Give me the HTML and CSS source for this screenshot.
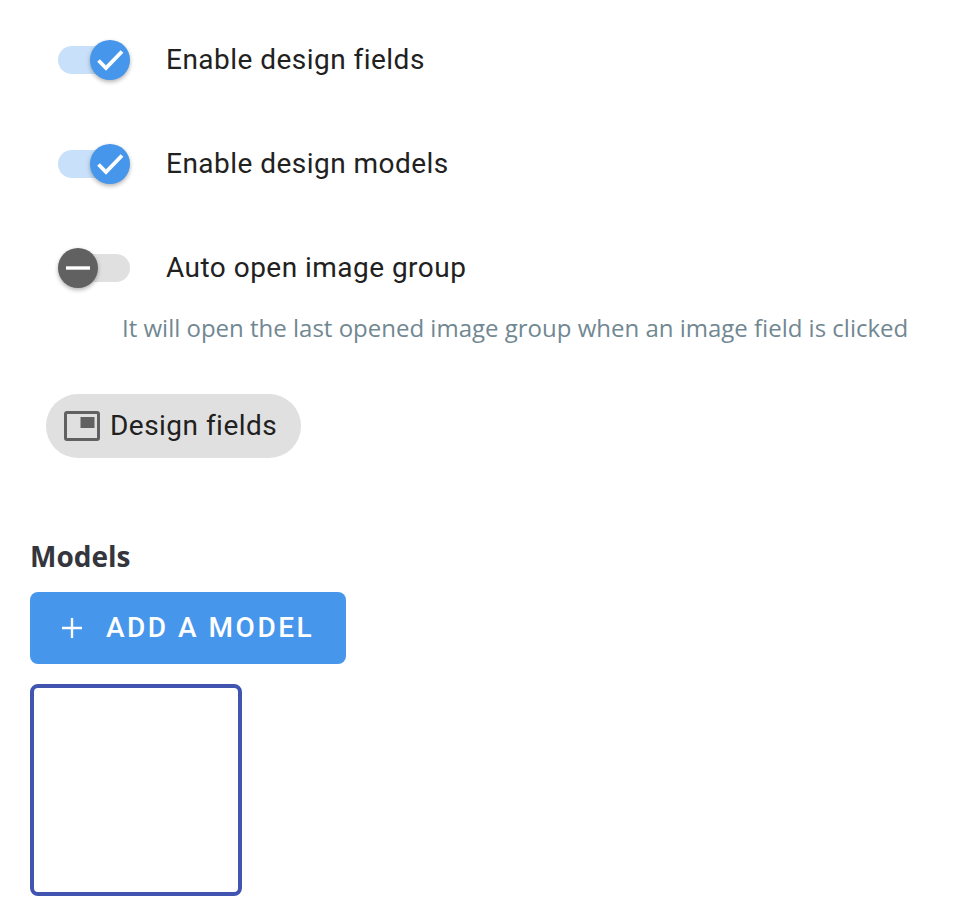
FILE: index.html
```html
<!DOCTYPE html>
<html lang="en">
<head>
<meta charset="utf-8">
<title>Settings</title>
<link rel="stylesheet" href="styles.css">
</head>
<body>
<main class="page">
  <section class="toggles">
    <label class="row">
      <span class="switch on"><span class="thumb">
        <svg viewBox="0 0 40 40" class="thumb-icon"><path d="M8.5 20.5l7.5 7.5L32 11.5" fill="none" stroke="#fff" stroke-width="3.8"/></svg>
      </span></span>
      <span class="label">Enable design fields</span>
    </label>
    <label class="row">
      <span class="switch on"><span class="thumb">
        <svg viewBox="0 0 40 40" class="thumb-icon"><path d="M8.5 20.5l7.5 7.5L32 11.5" fill="none" stroke="#fff" stroke-width="3.8"/></svg>
      </span></span>
      <span class="label">Enable design models</span>
    </label>
    <label class="row">
      <span class="switch off"><span class="thumb">
        <svg viewBox="0 0 40 40" class="thumb-icon"><path d="M8 20h24" fill="none" stroke="#fff" stroke-width="3.4"/></svg>
      </span></span>
      <span class="label">Auto open image group</span>
    </label>
  </section>
  <p class="hint">It will open the last opened image group when an image field is clicked</p>
  <div class="chip">
    <svg viewBox="0 0 36 30" class="chip-icon"><rect x="1.5" y="1.5" width="33" height="27" rx="1.5" fill="none" stroke="#616161" stroke-width="3"/><rect x="16.5" y="6" width="14" height="11" fill="#616161"/></svg>
    <span>Design fields</span>
  </div>
  <h2 class="heading">Models</h2>
  <button class="add" type="button">
    <svg viewBox="0 0 22 22" class="add-icon"><path d="M11 0v22M0 11h22" fill="none" stroke="#fff" stroke-width="2.6"/></svg>
    <span>ADD A MODEL</span>
  </button>
  <div class="model"></div>
</main>
</body>
</html>
```
FILE: styles.css
```css
* { box-sizing: border-box; }
html, body { margin: 0; background: #fff; }
body { height: 914px; overflow: hidden; }
.page { padding: 28px 0 0 30px; display: flex; flex-direction: column; align-items: flex-start; }
.toggles { display: flex; flex-direction: column; gap: 40px; padding-left: 28px; }
.row { display: flex; align-items: center; height: 64px; gap: 36px; }
.switch { position: relative; display: block; width: 72px; height: 28px; border-radius: 14px; }
.switch.on { background: #c8e0f9; }
.switch.off { background: #e0e0e0; }
.thumb { position: absolute; top: -6px; width: 40px; height: 40px; border-radius: 50%; box-shadow: 0 2px 4px rgba(0,0,0,.3); }
.on .thumb { right: 0; background: #4696ec; }
.off .thumb { left: 0; background: #616161; }
.thumb-icon { display: block; width: 40px; height: 40px; }
.label { font: 400 28px/32px Roboto, sans-serif; letter-spacing: .47px; color: #212121; }
.hint { margin: 12px 0 0 92px; font: 400 24px/32px "Open Sans", sans-serif; color: #718892; white-space: nowrap; }
.chip { margin: 50px 0 0 16px; display: flex; align-items: center; height: 64px; padding: 0 24px 0 18px; gap: 10px; border-radius: 32px; background: #e0e0e0; font: 400 28px/32px Roboto, sans-serif; letter-spacing: .47px; color: #212121; }
.chip-icon { width: 36px; height: 30px; }
.heading { margin: 80px 0 0 0; font: 700 28px/36px "Open Sans", sans-serif; color: #35363d; }
.add { margin-top: 18px; display: flex; align-items: center; gap: 24px; width: 316px; height: 72px; padding: 0 0 0 32px; border: 0; border-radius: 8px; background: #4696ec; color: #fff; font: 500 28px/32px Roboto, sans-serif; letter-spacing: 2.5px; }
.add-icon { width: 20px; height: 20px; }
.model { margin-top: 20px; width: 212px; height: 212px; border: 4px solid #4054b0; border-radius: 8px; }
```
